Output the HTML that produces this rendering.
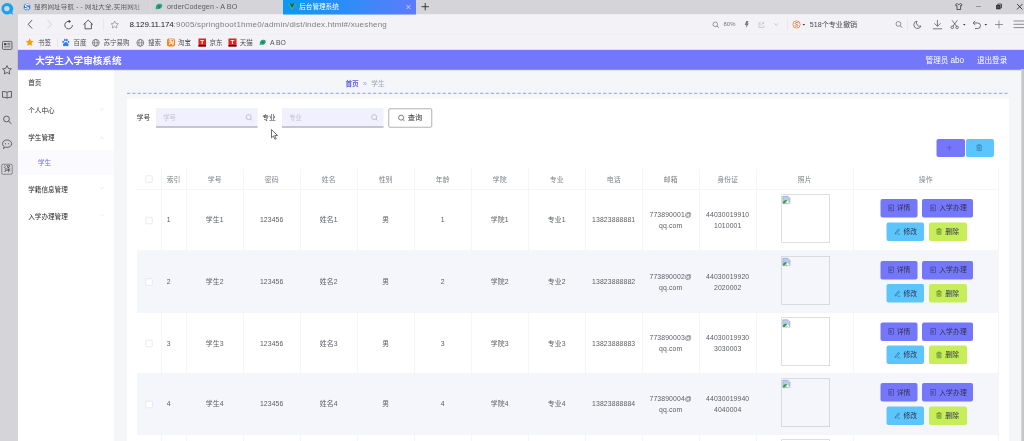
<!DOCTYPE html>
<html lang="zh-CN">
<head>
<meta charset="utf-8">
<title>后台管理系统</title>
<style>
*{box-sizing:border-box;margin:0;padding:0}
html,body{width:1024px;height:441px;overflow:hidden;background:#f5f6f8}
body{font-family:"Liberation Sans","Noto Sans CJK SC",sans-serif;color:#333}
#root{position:absolute;left:0;top:0;width:2048px;height:882px;transform:scale(.5);transform-origin:0 0;overflow:hidden;background:#f5f6f8;filter:blur(.7px)}
.abs{position:absolute}
.t{position:absolute;white-space:nowrap;line-height:1;transform:translateY(-50%)}
svg{position:absolute;overflow:visible}

/* ---------- browser chrome ---------- */
#lside{left:0;top:0;width:36px;height:882px;background:#d5d5d9}
#tabbar{left:36px;top:0;width:2012px;height:28.6px;background:#d5d5d9}
#navbar{left:36px;top:28.6px;width:2012px;height:40px;background:#f3f2f7}
#bmbar{left:36px;top:68.6px;width:2012px;height:31.8px;background:#f3f2f7;border-top:1px solid #e9e8ee}
#acttab{left:566px;top:0;width:266px;height:28.6px;background:linear-gradient(90deg,#0999f5 0%,#2f8cf8 50%,#5f7bfb 100%)}
.tabt{font-size:13px;color:#5c5c60;top:13.6px}
.bm{font-size:13px;color:#505054;top:85.2px}
.url{font-size:16px;top:49.2px;color:#7e7e82;letter-spacing:0.4px}
.url b{font-weight:normal;color:#222;letter-spacing:-0.34px}

/* ---------- app header ---------- */
#hdr{left:36px;top:100.4px;width:2012px;height:38.6px;background:#7377fa;box-shadow:0 0.8px 2.4px rgba(0,0,0,.38)}
#title{left:70.4px;top:121.2px;font-size:19.2px;font-weight:bold;color:#fff}
.hr{font-size:15.2px;color:#fff;top:120.6px}

/* ---------- side menu ---------- */
#menu{left:36px;top:138.4px;width:192px;height:744px;background:#fff}
.mi{font-size:13.2px;color:#2b2b2b;left:56.4px}
#sub{left:36px;top:301px;width:192px;height:49px;background:#fbfbff}
.arr{left:199px}

/* ---------- content ---------- */
#card{left:254px;top:197.2px;width:1764.4px;height:690px;background:#fff}
.lab{font-size:13.6px;color:#333;top:236.4px}
.inp{top:216.2px;height:38.8px;background:#f1f0fe;border-bottom:2.4px solid #98989d}
.ph{font-size:12.8px;color:#c0c4cc;top:235.6px}
#qbtn{left:776.6px;top:216.6px;width:87.4px;height:38.6px;border:1.1px solid #666;border-radius:2.8px;background:#fff}
.tb{top:278px;height:36px;border-radius:4px}

table{position:absolute;left:273.8px;top:337px;width:1722.6px;border-collapse:collapse;table-layout:fixed;font-size:13.7px;color:#5a5d63;letter-spacing:0.24px}
th,td{border:1px solid #e9ecf3;text-align:center;vertical-align:middle;font-weight:normal;position:relative;padding:0}
th{height:41.6px;color:#7e8289;border-top:none;font-weight:normal;font-size:13.7px}
td{line-height:21.8px;padding-top:1px}
tr.s td{background:#f5f6fb}
th:first-child,td:first-child{border-left:none}
td.l,th.l{text-align:left;padding-left:10.4px}
.cb{display:inline-block;width:14px;height:14px;border:1px solid #d4d7de;border-radius:2px;background:#fff;vertical-align:middle}
.img{position:absolute;left:50.2px;top:calc(50% - 51px);width:96.8px;height:96.8px;border:1.1px solid #bdbdbd}
.btn{position:absolute;height:37px;border-radius:4px;font-size:13.6px;color:#30304c;white-space:nowrap}
.btn span{position:absolute;top:50%;transform:translateY(-50%);line-height:1}
.p{background:#7577fb}.b{background:#5cc5fb}.g{background:#c5ee59}
</style>
</head>
<body>
<div id="root">

<!-- browser chrome -->
<div class="abs" id="tabbar"></div>
<div class="abs" id="navbar"></div>
<div class="abs" id="bmbar"></div>
<div class="abs" id="acttab"></div>
<div class="abs" id="lside"></div>

<!-- left sidebar icons -->
<svg style="left:1.8px;top:5.4px" width="26px" height="26.4px" viewBox="0 0 26 26.400"><path d="M12.500 1a11.500 11.500 0 1 0 6.300 21.100l5.600 2.600-1.800-5.900A11.500 11.500 0 0 0 12.500 1zm-.800 5.800a5.400 5.400 0 1 1 0 10.800 5.400 5.400 0 0 1 0-10.800z" fill="#19a2f4" fill-rule="evenodd"/></svg>
<svg style="left:3.6px;top:81.6px" width="20.8px" height="17.6px" viewBox="0 0 21 18"><rect x=".8" y=".8" width="19.400" height="16.400" rx="2.200" fill="none" stroke="#3c3c40" stroke-width="1.500"/><rect x="4" y="4.500" width="5" height="4" fill="#3c3c40"/><path d="M11 5h6M11 8h6M4 12h13" stroke="#3c3c40" stroke-width="1.300"/></svg>
<svg style="left:4.2px;top:130px" width="20px" height="19.6px" viewBox="0 0 20 19.600"><path d="M10 1.300l2.700 5.600 6.100.8-4.500 4.200 1.100 6.100L10 15l-5.400 3 1.100-6.100L1.200 7.700l6.100-.8z" fill="none" stroke="#3c3c40" stroke-width="1.500" stroke-linejoin="round"/></svg>
<svg style="left:4.2px;top:182px" width="20px" height="15.6px" viewBox="0 0 20 15.600"><path d="M10 2.600C8 1.200 4.500.8 1 1v11.600c3.500-.2 7 .2 9 1.600 2-1.400 5.500-1.800 9-1.600V1c-3.500-.2-7 .2-9 1.600zM10 2.600v11.600" fill="none" stroke="#3c3c40" stroke-width="1.500" stroke-linejoin="round"/></svg>
<svg style="left:5.6px;top:230.8px" width="17.6px" height="17.2px" viewBox="0 0 17.600 17.200"><circle cx="7" cy="7" r="5.800" fill="none" stroke="#3c3c40" stroke-width="1.500"/><path d="M11.300 11.300l5.500 5.300" stroke="#3c3c40" stroke-width="1.700"/></svg>
<svg style="left:3.8px;top:278.8px" width="20.4px" height="19.2px" viewBox="0 0 20.400 19.200"><path d="M10.200 1C5.100 1 1 4.300 1 8.400c0 2.300 1.300 4.400 3.400 5.700L3 18l4.200-2.600c1 .2 2 .4 3 .4 5.100 0 9.200-3.300 9.200-7.400S15.300 1 10.200 1z" fill="none" stroke="#3c3c40" stroke-width="1.500" stroke-linejoin="round"/><circle cx="7" cy="8.400" r="1.100" fill="#3c3c40"/><circle cx="13.400" cy="8.400" r="1.100" fill="#3c3c40"/></svg>
<div class="abs" style="left:3.4px;top:327.6px;width:21.8px;height:21.2px;border:1.500px solid #3c3c40;border-radius:3.2px"></div>
<div class="t" style="left:6.8px;top:338.2px;font-size:14.8px;color:#3c3c40">译</div>

<!-- tabs -->
<svg style="left:46.2px;top:5.6px" width="16px" height="16px" viewBox="0 0 15 15"><circle cx="7.500" cy="7.500" r="6.700" fill="#2a74d2" stroke="#c3cbd9" stroke-width="1.300"/><path d="M11 3.600C7.800 2.400 4.600 3.300 4.600 5.500c0 2.500 5.800 1.700 5.800 4 0 1.800-3.200 2.400-6.500 1" fill="none" stroke="#fff" stroke-width="2" stroke-linecap="round"/></svg>
<div class="t tabt" style="left:68px;width:216px;overflow:hidden;letter-spacing:0.4px;-webkit-mask-image:linear-gradient(90deg,#000 90%,rgba(0,0,0,.35))">搜狗网址导航 - - 网址大全,实用网址</div>
<svg style="left:310.8px;top:6.8px" width="14px" height="13.2px" viewBox="0 0 14 13"><path d="M2 3.500C4 0 11-.500 13 2.500c1.500 3-1 7.500-5 8.500-3.500.800-6-1-7 1.500C-.200 9 .500 6 2 3.500z" fill="#2aa777"/><path d="M5 4l2.200 4L9.500 4" stroke="#25505a" stroke-width="1.300" fill="none"/></svg>
<div class="t tabt" style="left:334px;font-size:14.4px;letter-spacing:0.16px">orderCodegen - A BO</div>
<svg style="left:575.6px;top:7px" width="16.4px" height="14px" viewBox="0 0 16.400 14"><path d="M0 0h3.300l4.900 8.400L13.100 0h3.300L8.200 14z" fill="#3fb27f"/><path d="M3.300 0h3l1.900 3.300L10.100 0h3L8.200 8.400z" fill="#34495e"/></svg>
<div class="t tabt" style="left:598.4px;color:#fff;font-size:13.2px">后台管理系统</div>
<svg style="left:812px;top:9px" width="10px" height="10px" viewBox="0 0 10 10"><path d="M1 1l8 8M9 1L1 9" stroke="#e8f2ff" stroke-width="1.400"/></svg>
<svg style="left:843px;top:5.6px" width="14.8px" height="14.8px" viewBox="0 0 15 15"><path d="M7.500 0v15M0 7.500h15" stroke="#222" stroke-width="1.700"/></svg>

<div class="abs" style="left:300.6px;top:2px;width:1px;height:25px;background:#e1e1e5"></div>
<!-- window controls -->
<svg style="left:1910px;top:6px" width="15.2px" height="14px" viewBox="0 0 15.200 14"><path d="M4.500 1L1 3.500l1.600 2.600 1.400-.800V13h7.200V5.300l1.400.800L14.200 3.500 10.700 1c-.600 1.300-1.700 2-3.100 2S5.100 2.300 4.500 1z" fill="none" stroke="#222" stroke-width="1.400" stroke-linejoin="round"/></svg>
<div class="abs" style="left:1952px;top:12.6px;width:10px;height:1.8px;background:#555"></div>
<svg style="left:1992.4px;top:7.2px" width="12px" height="12px" viewBox="0 0 12 12"><path d="M3.500 3V1h7.500v7.500H9" fill="none" stroke="#222" stroke-width="1.500"/><rect x="1.400" y="3.900" width="6.700" height="6.700" fill="#555" stroke="#222" stroke-width="1.800"/></svg>
<svg style="left:2033px;top:6.6px" width="12.8px" height="12.8px" viewBox="0 0 13 13"><path d="M1 1l11 11M12 1L1 12" stroke="#222" stroke-width="1.700"/></svg>

<!-- nav bar -->
<svg style="left:54.8px;top:39.2px" width="10.4px" height="19.2px" viewBox="0 0 9.200 17.200"><path d="M8.200 1L1.200 8.600l7 7.600" fill="none" stroke="#3a3a3e" stroke-width="1.500"/></svg>
<svg style="left:94.4px;top:39.2px" width="10.4px" height="19.2px" viewBox="0 0 9.200 17.200"><path d="M1 1l7 7.600-7 7.600" fill="none" stroke="#cdcdd2" stroke-width="1.500"/></svg>
<svg style="left:128px;top:38.8px" width="18.8px" height="19.6px" viewBox="0 0 18.800 19.600"><path d="M16.800 11.200A7.600 7.600 0 1 1 11 3.800" fill="none" stroke="#333" stroke-width="1.600"/><path d="M9.500.500l4.500 3.300-4.500 3z" fill="#333"/></svg>
<svg style="left:165.6px;top:38.6px" width="20.8px" height="19.6px" viewBox="0 0 20.800 19.600"><path d="M1 10.200L10.400 1.200l9.400 9M4 8v10.600h12.800V8" fill="none" stroke="#333" stroke-width="1.600" stroke-linejoin="round"/></svg>
<div class="abs" style="left:206px;top:37px;width:1px;height:24px;background:#dcdce0"></div>
<svg style="left:220.6px;top:40.6px" width="16.8px" height="16.4px" viewBox="0 0 20 19.600"><path d="M10 1.300l2.700 5.600 6.100.8-4.500 4.200 1.100 6.100L10 15l-5.400 3 1.100-6.100L1.200 7.700l6.100-.8z" fill="none" stroke="#8a8a8f" stroke-width="1.600" stroke-linejoin="round"/></svg>
<div class="t url" style="left:259px"><b>8.129.11.174</b>:9005/springboot1hme0/admin/dist/index.html#/xuesheng</div>

<svg style="left:1425px;top:42.8px" width="13.2px" height="13.2px" viewBox="0 0 13.200 13.200"><circle cx="5.600" cy="5.600" r="4.600" fill="none" stroke="#66666a" stroke-width="1.300"/><path d="M9 9l3.600 3.600" stroke="#66666a" stroke-width="1.500"/></svg>
<div class="t" style="left:1447.2px;top:49.4px;font-size:11.8px;color:#77777b">80%</div>
<svg style="left:1488.6px;top:42.4px" width="8.8px" height="14px" viewBox="0 0 8.800 14"><path d="M3.500 0h4.500L5.800 5h3L2.500 14l1.300-6H.500z" fill="#77777b"/></svg>
<svg style="left:1517px;top:42.6px" width="13.2px" height="12.8px" viewBox="0 0 13.200 12.800"><path d="M5 2.500H1v9.500h9.500V8" fill="none" stroke="#b4b4b9" stroke-width="1.200"/><path d="M4.500 8.500c.500-3 2.500-5 6-5.500M8 .800l3 2.200-2.600 2.400" fill="none" stroke="#b4b4b9" stroke-width="1.200"/></svg>
<svg style="left:1547.6px;top:46.4px" width="9.2px" height="5.2px" viewBox="0 0 9.200 5.200"><path d="M.600.600l4 4 4-4" fill="none" stroke="#a9a9ae" stroke-width="1.200"/></svg>
<div class="abs" style="left:1575px;top:38px;width:1px;height:22px;background:#dcdce0"></div>
<svg style="left:1585.2px;top:41.2px" width="16px" height="16px" viewBox="0 0 16 16"><circle cx="8" cy="8" r="7.300" fill="#fff" stroke="#f0642a" stroke-width="1.400"/><path d="M11.300 4.600C8.400 3.600 5.200 4.200 5.200 6.100c0 2.300 5.600 1.500 5.600 3.700 0 1.600-3 2.200-6.100 1" fill="none" stroke="#f0642a" stroke-width="1.900" stroke-linecap="round"/></svg>
<svg style="left:1605.2px;top:48px" width="5.2px" height="3.2px" viewBox="0 0 5.200 3.200"><path d="M0 0h5.200L2.600 3.200z" fill="#333"/></svg>
<div class="t" style="left:1619.6px;top:49.2px;font-size:14.2px;color:#4a4a4e">518个专业撤销</div>
<svg style="left:1791.2px;top:42.2px" width="14px" height="14px" viewBox="0 0 12 12"><circle cx="5" cy="5" r="4.100" fill="none" stroke="#66666a" stroke-width="1.200"/><path d="M8 8l3.400 3.400" stroke="#66666a" stroke-width="1.400"/></svg>
<div class="abs" style="left:1814px;top:38px;width:1px;height:22px;background:#dcdce0"></div>
<svg style="left:1826.8px;top:40.8px" width="16px" height="16.8px" viewBox="0 0 16 16.800"><path d="M7 1.200A7.400 7.400 0 1 0 15 11 6.600 6.600 0 0 1 7 1.200z" fill="none" stroke="#444" stroke-width="1.400" stroke-linejoin="round"/></svg>
<svg style="left:1865.4px;top:39.8px" width="19.8px" height="18.6px" viewBox="0 0 19.800 18.600"><path d="M9.900 0v12.500M3.800 6.600l6.100 6.100L16 6.600M.500 17.600h18.800" fill="none" stroke="#444" stroke-width="1.400"/></svg>
<svg style="left:1901px;top:40px" width="16.8px" height="18px" viewBox="0 0 16.800 18"><path d="M3 .500l9 12M13.800.500l-9 12" stroke="#444" stroke-width="1.400" fill="none"/><circle cx="3.600" cy="14.600" r="2.600" fill="none" stroke="#444" stroke-width="1.400"/><circle cx="13.200" cy="14.600" r="2.600" fill="none" stroke="#444" stroke-width="1.400"/></svg>
<svg style="left:1925.6px;top:48px" width="5.2px" height="3.2px" viewBox="0 0 5.200 3.200"><path d="M0 0h5.200L2.600 3.200z" fill="#333"/></svg>
<svg style="left:1945.2px;top:40.6px" width="17.2px" height="17.6px" viewBox="0 0 17.200 17.600"><path d="M2 5h8.500a5.500 5.500 0 0 1 0 11H5" fill="none" stroke="#444" stroke-width="1.500"/><path d="M5.500.800L1.200 5l4.300 4.200" fill="none" stroke="#444" stroke-width="1.500"/></svg>
<svg style="left:1969px;top:48px" width="5.2px" height="3.2px" viewBox="0 0 5.200 3.200"><path d="M0 0h5.200L2.600 3.200z" fill="#333"/></svg>
<svg style="left:1990px;top:41.2px" width="16px" height="16px" viewBox="0 0 16 16"><path d="M8 0v16M0 8h16" stroke="#66666a" stroke-width="1.300"/></svg>
<svg style="left:2026.8px;top:41.4px" width="21.2px" height="15.2px" viewBox="0 0 21.200 15.200"><path d="M0 1h21.200M0 7.600h21.200M0 14.200h21.200" stroke="#555" stroke-width="1.300"/></svg>

<!-- bookmarks -->
<svg style="left:50.8px;top:76.4px" width="16.8px" height="16.4px" viewBox="0 0 20 19.600"><path d="M10 .800l2.900 6 6.500.9-4.800 4.500 1.200 6.500L10 15.600l-5.800 3.100 1.200-6.500L.600 7.700l6.500-.9z" fill="#ff9a0e"/></svg>
<div class="t bm" style="left:76px">书签</div>
<div class="abs" style="left:114px;top:76px;width:1px;height:18px;background:#d9d9de"></div>
<svg style="left:123.6px;top:77.2px" width="15.2px" height="16px" viewBox="0 0 15.200 16"><ellipse cx="2.300" cy="6.800" rx="1.700" ry="2.300" fill="#2f7df0"/><ellipse cx="5.700" cy="3" rx="1.700" ry="2.400" fill="#2f7df0"/><ellipse cx="9.700" cy="3" rx="1.700" ry="2.400" fill="#2f7df0"/><ellipse cx="13" cy="6.800" rx="1.700" ry="2.300" fill="#2f7df0"/><path d="M7.600 7c2.400 0 3.300 2.400 5 4 1.400 1.400.800 4.200-1.600 4.400-1.300.1-2.300-.300-3.400-.300s-2.100.4-3.400.3C1.800 15.200 1.200 12.400 2.600 11c1.700-1.600 2.600-4 5-4z" fill="#2f7df0"/></svg>
<div class="t bm" style="left:147.2px">百度</div>
<svg class="gl" style="left:184.4px;top:77.6px" width="15.2px" height="15.2px" viewBox="0 0 15.200 15.200"><circle cx="7.600" cy="7.600" r="6.800" fill="none" stroke="#555" stroke-width="1.300"/><ellipse cx="7.600" cy="7.600" rx="3" ry="6.800" fill="none" stroke="#555" stroke-width="1.100"/><path d="M.800 7.600h13.600" stroke="#555" stroke-width="1.100"/></svg>
<div class="t bm" style="left:207.2px">苏宁易购</div>
<svg class="gl" style="left:273.4px;top:77.6px" width="15.2px" height="15.2px" viewBox="0 0 15.200 15.200"><circle cx="7.600" cy="7.600" r="6.800" fill="none" stroke="#555" stroke-width="1.300"/><ellipse cx="7.600" cy="7.600" rx="3" ry="6.800" fill="none" stroke="#555" stroke-width="1.100"/><path d="M.800 7.600h13.600" stroke="#555" stroke-width="1.100"/></svg>
<div class="t bm" style="left:296px">搜索</div>
<div class="abs" style="left:334.4px;top:77.4px;width:15.6px;height:15.2px;background:#f58220;border-radius:3.6px"></div>
<div class="t" style="left:336.8px;top:85px;font-size:11.2px;color:#fff;font-weight:bold">淘</div>
<div class="t bm" style="left:356px">淘宝</div>
<div class="abs" style="left:396.8px;top:77.2px;width:15.2px;height:16px;background:#e2231a;border-bottom:3.2px solid #1a1a1a"></div>
<div class="t" style="left:400.6px;top:83.8px;font-size:12.4px;color:#fff;font-weight:bold">T</div>
<div class="t bm" style="left:418.8px">京东</div>
<div class="abs" style="left:457.4px;top:77.2px;width:15.2px;height:16px;background:#e2231a;border-bottom:3.2px solid #1a1a1a"></div>
<div class="t" style="left:461.2px;top:83.8px;font-size:12.4px;color:#fff;font-weight:bold">T</div>
<div class="t bm" style="left:479.6px">天猫</div>
<svg style="left:519.2px;top:78.6px" width="13.2px" height="12.4px" viewBox="0 0 14 13"><path d="M2 3.500C4 0 11-.500 13 2.500c1.500 3-1 7.500-5 8.500-3.500.800-6-1-7 1.500C-.200 9 .500 6 2 3.500z" fill="#2aa777"/><path d="M5 4l2.200 4L9.500 4" stroke="#25505a" stroke-width="1.300" fill="none"/></svg>
<div class="t bm" style="left:540px;font-size:13.6px">A BO</div>


<!-- app -->
<div class="abs" id="menu"></div>
<div class="abs" id="sub"></div>
<div class="abs" id="hdr"></div>
<div class="t" id="title">大学生入学审核系统</div>
<div class="t hr" style="left:1851.2px">管理员 <span style="font-size:16.4px">abo</span></div>
<div class="t hr" style="left:1953.8px">退出登录</div>

<div class="t mi" style="top:166.4px">首页</div>
<div class="t mi" style="top:222px">个人中心</div>
<div class="t mi" style="top:275.6px">学生管理</div>
<div class="t mi" style="top:325.2px;left:76px;color:#6c6ff0">学生</div>
<div class="t mi" style="top:379.4px">学籍信息管理</div>
<div class="t mi" style="top:433px">入学办理管理</div>
<svg class="arr" style="top:216.4px" width="9.2px" height="5.2px" viewBox="0 0 9 5"><path d="M.6.6 4.5 4.4 8.4.6" fill="none" stroke="#cfd2d9" stroke-width=".9"/></svg>
<svg class="arr" style="top:272.6px" width="9.2px" height="5.2px" viewBox="0 0 9 5"><path d="M.6 4.4 4.5.6 8.4 4.4" fill="none" stroke="#cfd2d9" stroke-width=".9"/></svg>
<svg class="arr" style="top:374.4px" width="9.2px" height="5.2px" viewBox="0 0 9 5"><path d="M.6.6 4.5 4.4 8.4.6" fill="none" stroke="#cfd2d9" stroke-width=".9"/></svg>
<svg class="arr" style="top:428px" width="9.2px" height="5.2px" viewBox="0 0 9 5"><path d="M.6.6 4.5 4.4 8.4.6" fill="none" stroke="#cfd2d9" stroke-width=".9"/></svg>
<div class="abs" style="left:2042.4px;top:138.4px;width:6px;height:744px;background:linear-gradient(90deg,#e3e3e5,#c6c6c8 40%)"></div>
<!--MENU-->

<div class="abs" id="card"></div>

<div class="t" style="left:690.8px;top:167px;font-size:13.4px;font-weight:bold;color:#5c60e6">首页</div>
<div class="t" style="left:725.6px;top:166.8px;font-size:15.2px;color:#a4a8b0">»</div>
<div class="t" style="left:742.6px;top:167px;font-size:13.4px;color:#9aa3ad">学生</div>
<svg style="left:253.8px;top:184.8px" width="1764.6px" height="3.2px"><line x1="0" y1="1.6px" x2="1764.6px" y2="1.6px" stroke="#989af0" stroke-width="2px" stroke-dasharray="6.4 4.3"/></svg>

<div class="t lab" style="left:273.6px">学号</div>
<div class="abs inp" style="left:311.8px;width:203px"></div>
<div class="t ph" style="left:326.4px">学号</div>
<svg style="left:491.2px;top:227.6px" width="14px" height="14px" viewBox="0 0 12 12"><circle cx="5.4" cy="5.4" r="4.3" fill="none" stroke="#a6aab2" stroke-width="1.1"/><path d="M8.6 8.6 11 11" stroke="#a6aab2" stroke-width="1.1" fill="none"/></svg>
<div class="t lab" style="left:524.6px">专业</div>
<div class="abs inp" style="left:563.6px;width:203.2px"></div>
<div class="t ph" style="left:578.4px">专业</div>
<svg style="left:742.4px;top:227.6px" width="14px" height="14px" viewBox="0 0 12 12"><circle cx="5.4" cy="5.4" r="4.3" fill="none" stroke="#a6aab2" stroke-width="1.1"/><path d="M8.6 8.6 11 11" stroke="#a6aab2" stroke-width="1.1" fill="none"/></svg>
<div class="abs" id="qbtn"></div>
<svg style="left:796.4px;top:228.8px" width="14px" height="14px" viewBox="0 0 12 12"><circle cx="5.4" cy="5.4" r="4.3" fill="none" stroke="#444" stroke-width="1.2"/><path d="M8.6 8.6 11 11" stroke="#444" stroke-width="1.2" fill="none"/></svg>
<div class="t" style="left:815.6px;top:236.4px;font-size:14.6px;color:#333">查询</div>
<svg style="left:542px;top:258.4px" width="14px" height="22px" viewBox="0 0 14 22"><path d="M1 1v16.5l4-3.6 2.9 6.6 2.6-1.1-2.9-6.4H13z" fill="#fff" stroke="#222" stroke-width="1.3" stroke-linejoin="round"/></svg>

<div class="abs tb p" style="left:1872.6px;width:57px"></div>
<div class="abs tb b" style="left:1932px;width:56px"></div>
<svg style="left:1893px;top:289.6px" width="11.2px" height="11.2px" viewBox="0 0 10 10"><path d="M5 0v10M0 5h10" stroke="#5350b8" stroke-width="1" fill="none"/></svg>
<svg style="left:1951.6px;top:287.6px" width="12.8px" height="14.4px" viewBox="0 0 12 14"><path d="M.5 3.5h11M4 3.3V1.2h4v2.1M2 3.8v9h8v-9M4.6 6.5h2.8v3.6H4.600z" fill="none" stroke="#2f6f9f" stroke-width="1.1"/></svg>
<table><colgroup><col style="width:48.6px"><col style="width:50px"><col style="width:114px"><col style="width:114px"><col style="width:114px"><col style="width:114px"><col style="width:114px"><col style="width:114px"><col style="width:114px"><col style="width:114px"><col style="width:114px"><col style="width:114px"><col style="width:194px"><col style="width:290px"></colgroup>
<tr><th><span class="cb"></span></th><th class="l">索引</th><th>学号</th><th>密码</th><th>姓名</th><th>性别</th><th>年龄</th><th>学院</th><th>专业</th><th>电话</th><th>邮箱</th><th>身份证</th><th>照片</th><th>操作</th></tr>
<tr style="height:122px"><td><span class="cb"></span></td><td class="l">1</td><td>学生1</td><td>123456</td><td>姓名1</td><td>男</td><td>1</td><td>学院1</td><td>专业1</td><td>13823888881</td><td>773890001@<br>qq.com</td><td>44030019910<br>1010001</td><td><div class="img"><svg style="left:1px;top:2.6px" width="15.4px" height="15.8px" viewBox="0 0 15.400 15.800"><path d="M.600.600h10.200l4 4v10.600H.600z" fill="#b3cef6" stroke="#8a94a8" stroke-width="1.100"/><path d="M10.800.600v4h4z" fill="#f4f6fa" stroke="#a8b0c0" stroke-width=".800"/><path d="M1.200 15.200v-3.600c2-3 5.500-4 8.600-2.200l-5 5.800z" fill="#3d9a2c"/><path d="M9.800 9.400l5 5.800h-3.400l-3.600-3.400z" fill="#fff"/><path d="M4.800 15.200l5-5.800" stroke="#fff" stroke-width="1.100"/></svg></div></td><td><div class="btn p" style="left:53.8px;top:calc(50% - 41.6px);width:74.8px"><svg style="left:16.4px;top:11.4px" width="10.6px" height="13.4px" viewBox="0 0 10 12"><path d="M.6.6h8.800v10.800H.6z M2.800 4.500h2.500v3.500h-2.500z" fill="none" stroke="#3a3a78" stroke-width="1.1"/></svg><span style="left:32.6px">详情</span></div><div class="btn p" style="left:137.6px;top:calc(50% - 41.6px);width:101.8px"><svg style="left:16.4px;top:11.4px" width="10.6px" height="13.4px" viewBox="0 0 10 12"><path d="M.6.6h8.800v10.800H.6z M2.800 4.500h2.500v3.500h-2.500z" fill="none" stroke="#3a3a78" stroke-width="1.1"/></svg><span style="left:33.8px">入学办理</span></div><div class="btn b" style="left:66.6px;top:calc(50% + 5px);width:75px"><svg style="left:15.2px;top:11.6px" width="11.6px" height="13.6px" viewBox="0 0 11 13"><path d="M1.500 9.500 7.500 1.800 9.600 3.400 3.600 11.100 1.200 11.600zM6.500 12h4" fill="none" stroke="#2a5a80" stroke-width="1.1" stroke-linejoin="round"/></svg><span style="left:33.4px">修改</span></div><div class="btn g" style="left:151.2px;top:calc(50% + 5px);width:75.6px"><svg style="left:14.4px;top:11.6px" width="12px" height="13.6px" viewBox="0 0 12 14"><path d="M.5 3.500h11M4 3.300V1.200h4v2.100M2 3.800v9h8v-9M4.600 6.500h2.800v3.600H4.600z" fill="none" stroke="#4a5a20" stroke-width="1.1"/></svg><span style="left:32.6px">删除</span></div></td></tr>
<tr style="height:125.2px" class="s"><td><span class="cb"></span></td><td class="l">2</td><td>学生2</td><td>123456</td><td>姓名2</td><td>男</td><td>2</td><td>学院2</td><td>专业2</td><td>13823888882</td><td>773890002@<br>qq.com</td><td>44030019920<br>2020002</td><td><div class="img"><svg style="left:1px;top:2.6px" width="15.4px" height="15.8px" viewBox="0 0 15.400 15.800"><path d="M.600.600h10.200l4 4v10.600H.600z" fill="#b3cef6" stroke="#8a94a8" stroke-width="1.100"/><path d="M10.800.600v4h4z" fill="#f4f6fa" stroke="#a8b0c0" stroke-width=".800"/><path d="M1.200 15.200v-3.600c2-3 5.500-4 8.600-2.200l-5 5.800z" fill="#3d9a2c"/><path d="M9.800 9.400l5 5.800h-3.400l-3.600-3.400z" fill="#fff"/><path d="M4.800 15.200l5-5.800" stroke="#fff" stroke-width="1.100"/></svg></div></td><td><div class="btn p" style="left:53.8px;top:calc(50% - 41.6px);width:74.8px"><svg style="left:16.4px;top:11.4px" width="10.6px" height="13.4px" viewBox="0 0 10 12"><path d="M.6.6h8.800v10.800H.6z M2.800 4.500h2.500v3.500h-2.500z" fill="none" stroke="#3a3a78" stroke-width="1.1"/></svg><span style="left:32.6px">详情</span></div><div class="btn p" style="left:137.6px;top:calc(50% - 41.6px);width:101.8px"><svg style="left:16.4px;top:11.4px" width="10.6px" height="13.4px" viewBox="0 0 10 12"><path d="M.6.6h8.800v10.800H.6z M2.800 4.500h2.500v3.500h-2.500z" fill="none" stroke="#3a3a78" stroke-width="1.1"/></svg><span style="left:33.8px">入学办理</span></div><div class="btn b" style="left:66.6px;top:calc(50% + 5px);width:75px"><svg style="left:15.2px;top:11.6px" width="11.6px" height="13.6px" viewBox="0 0 11 13"><path d="M1.500 9.500 7.500 1.800 9.600 3.400 3.600 11.100 1.200 11.600zM6.500 12h4" fill="none" stroke="#2a5a80" stroke-width="1.1" stroke-linejoin="round"/></svg><span style="left:33.4px">修改</span></div><div class="btn g" style="left:151.2px;top:calc(50% + 5px);width:75.6px"><svg style="left:14.4px;top:11.6px" width="12px" height="13.6px" viewBox="0 0 12 14"><path d="M.5 3.500h11M4 3.300V1.200h4v2.100M2 3.800v9h8v-9M4.600 6.500h2.800v3.600H4.600z" fill="none" stroke="#4a5a20" stroke-width="1.1"/></svg><span style="left:32.6px">删除</span></div></td></tr>
<tr style="height:120.8px"><td><span class="cb"></span></td><td class="l">3</td><td>学生3</td><td>123456</td><td>姓名3</td><td>男</td><td>3</td><td>学院3</td><td>专业3</td><td>13823888883</td><td>773890003@<br>qq.com</td><td>44030019930<br>3030003</td><td><div class="img"><svg style="left:1px;top:2.6px" width="15.4px" height="15.8px" viewBox="0 0 15.400 15.800"><path d="M.600.600h10.200l4 4v10.600H.600z" fill="#b3cef6" stroke="#8a94a8" stroke-width="1.100"/><path d="M10.800.600v4h4z" fill="#f4f6fa" stroke="#a8b0c0" stroke-width=".800"/><path d="M1.200 15.200v-3.600c2-3 5.500-4 8.600-2.200l-5 5.800z" fill="#3d9a2c"/><path d="M9.800 9.400l5 5.800h-3.400l-3.600-3.400z" fill="#fff"/><path d="M4.800 15.200l5-5.800" stroke="#fff" stroke-width="1.100"/></svg></div></td><td><div class="btn p" style="left:53.8px;top:calc(50% - 41.6px);width:74.8px"><svg style="left:16.4px;top:11.4px" width="10.6px" height="13.4px" viewBox="0 0 10 12"><path d="M.6.6h8.800v10.800H.6z M2.800 4.500h2.500v3.500h-2.500z" fill="none" stroke="#3a3a78" stroke-width="1.1"/></svg><span style="left:32.6px">详情</span></div><div class="btn p" style="left:137.6px;top:calc(50% - 41.6px);width:101.8px"><svg style="left:16.4px;top:11.4px" width="10.6px" height="13.4px" viewBox="0 0 10 12"><path d="M.6.6h8.800v10.800H.6z M2.800 4.500h2.500v3.500h-2.500z" fill="none" stroke="#3a3a78" stroke-width="1.1"/></svg><span style="left:33.8px">入学办理</span></div><div class="btn b" style="left:66.6px;top:calc(50% + 5px);width:75px"><svg style="left:15.2px;top:11.6px" width="11.6px" height="13.6px" viewBox="0 0 11 13"><path d="M1.500 9.500 7.500 1.800 9.600 3.400 3.600 11.100 1.200 11.600zM6.500 12h4" fill="none" stroke="#2a5a80" stroke-width="1.1" stroke-linejoin="round"/></svg><span style="left:33.4px">修改</span></div><div class="btn g" style="left:151.2px;top:calc(50% + 5px);width:75.6px"><svg style="left:14.4px;top:11.6px" width="12px" height="13.6px" viewBox="0 0 12 14"><path d="M.5 3.500h11M4 3.300V1.200h4v2.100M2 3.800v9h8v-9M4.600 6.500h2.800v3.600H4.600z" fill="none" stroke="#4a5a20" stroke-width="1.1"/></svg><span style="left:32.6px">删除</span></div></td></tr>
<tr style="height:122.6px" class="s"><td><span class="cb"></span></td><td class="l">4</td><td>学生4</td><td>123456</td><td>姓名4</td><td>男</td><td>4</td><td>学院4</td><td>专业4</td><td>13823888884</td><td>773890004@<br>qq.com</td><td>44030019940<br>4040004</td><td><div class="img"><svg style="left:1px;top:2.6px" width="15.4px" height="15.8px" viewBox="0 0 15.400 15.800"><path d="M.600.600h10.200l4 4v10.600H.600z" fill="#b3cef6" stroke="#8a94a8" stroke-width="1.100"/><path d="M10.800.600v4h4z" fill="#f4f6fa" stroke="#a8b0c0" stroke-width=".800"/><path d="M1.200 15.200v-3.600c2-3 5.500-4 8.600-2.200l-5 5.800z" fill="#3d9a2c"/><path d="M9.800 9.400l5 5.800h-3.400l-3.600-3.400z" fill="#fff"/><path d="M4.800 15.200l5-5.800" stroke="#fff" stroke-width="1.100"/></svg></div></td><td><div class="btn p" style="left:53.8px;top:calc(50% - 41.6px);width:74.8px"><svg style="left:16.4px;top:11.4px" width="10.6px" height="13.4px" viewBox="0 0 10 12"><path d="M.6.6h8.800v10.800H.6z M2.800 4.500h2.500v3.500h-2.500z" fill="none" stroke="#3a3a78" stroke-width="1.1"/></svg><span style="left:32.6px">详情</span></div><div class="btn p" style="left:137.6px;top:calc(50% - 41.6px);width:101.8px"><svg style="left:16.4px;top:11.4px" width="10.6px" height="13.4px" viewBox="0 0 10 12"><path d="M.6.6h8.800v10.800H.6z M2.800 4.500h2.500v3.500h-2.500z" fill="none" stroke="#3a3a78" stroke-width="1.1"/></svg><span style="left:33.8px">入学办理</span></div><div class="btn b" style="left:66.6px;top:calc(50% + 5px);width:75px"><svg style="left:15.2px;top:11.6px" width="11.6px" height="13.6px" viewBox="0 0 11 13"><path d="M1.500 9.500 7.500 1.800 9.600 3.400 3.600 11.100 1.200 11.600zM6.500 12h4" fill="none" stroke="#2a5a80" stroke-width="1.1" stroke-linejoin="round"/></svg><span style="left:33.4px">修改</span></div><div class="btn g" style="left:151.2px;top:calc(50% + 5px);width:75.6px"><svg style="left:14.4px;top:11.6px" width="12px" height="13.6px" viewBox="0 0 12 14"><path d="M.5 3.500h11M4 3.300V1.200h4v2.100M2 3.800v9h8v-9M4.600 6.500h2.800v3.600H4.600z" fill="none" stroke="#4a5a20" stroke-width="1.1"/></svg><span style="left:32.6px">删除</span></div></td></tr>
<tr style="height:122.6px"><td><span class="cb"></span></td><td class="l">5</td><td>学生5</td><td>123456</td><td>姓名5</td><td>男</td><td>5</td><td>学院5</td><td>专业5</td><td>13823888885</td><td>773890005@<br>qq.com</td><td>44030019950<br>5050005</td><td><div class="img"><svg style="left:1px;top:2.6px" width="15.4px" height="15.8px" viewBox="0 0 15.400 15.800"><path d="M.600.600h10.200l4 4v10.600H.600z" fill="#b3cef6" stroke="#8a94a8" stroke-width="1.100"/><path d="M10.800.600v4h4z" fill="#f4f6fa" stroke="#a8b0c0" stroke-width=".800"/><path d="M1.200 15.200v-3.600c2-3 5.500-4 8.600-2.200l-5 5.800z" fill="#3d9a2c"/><path d="M9.800 9.400l5 5.800h-3.400l-3.600-3.400z" fill="#fff"/><path d="M4.800 15.200l5-5.800" stroke="#fff" stroke-width="1.100"/></svg></div></td><td><div class="btn p" style="left:53.8px;top:calc(50% - 41.6px);width:74.8px"><svg style="left:16.4px;top:11.4px" width="10.6px" height="13.4px" viewBox="0 0 10 12"><path d="M.6.6h8.800v10.800H.6z M2.800 4.500h2.500v3.500h-2.500z" fill="none" stroke="#3a3a78" stroke-width="1.1"/></svg><span style="left:32.6px">详情</span></div><div class="btn p" style="left:137.6px;top:calc(50% - 41.6px);width:101.8px"><svg style="left:16.4px;top:11.4px" width="10.6px" height="13.4px" viewBox="0 0 10 12"><path d="M.6.6h8.800v10.800H.6z M2.800 4.500h2.500v3.500h-2.500z" fill="none" stroke="#3a3a78" stroke-width="1.1"/></svg><span style="left:33.8px">入学办理</span></div><div class="btn b" style="left:66.6px;top:calc(50% + 5px);width:75px"><svg style="left:15.2px;top:11.6px" width="11.6px" height="13.6px" viewBox="0 0 11 13"><path d="M1.500 9.500 7.500 1.800 9.600 3.400 3.600 11.100 1.200 11.600zM6.500 12h4" fill="none" stroke="#2a5a80" stroke-width="1.1" stroke-linejoin="round"/></svg><span style="left:33.4px">修改</span></div><div class="btn g" style="left:151.2px;top:calc(50% + 5px);width:75.6px"><svg style="left:14.4px;top:11.6px" width="12px" height="13.6px" viewBox="0 0 12 14"><path d="M.5 3.500h11M4 3.300V1.200h4v2.100M2 3.800v9h8v-9M4.600 6.500h2.800v3.600H4.600z" fill="none" stroke="#4a5a20" stroke-width="1.1"/></svg><span style="left:32.6px">删除</span></div></td></tr>
</table>


</div>
</body>
</html>
